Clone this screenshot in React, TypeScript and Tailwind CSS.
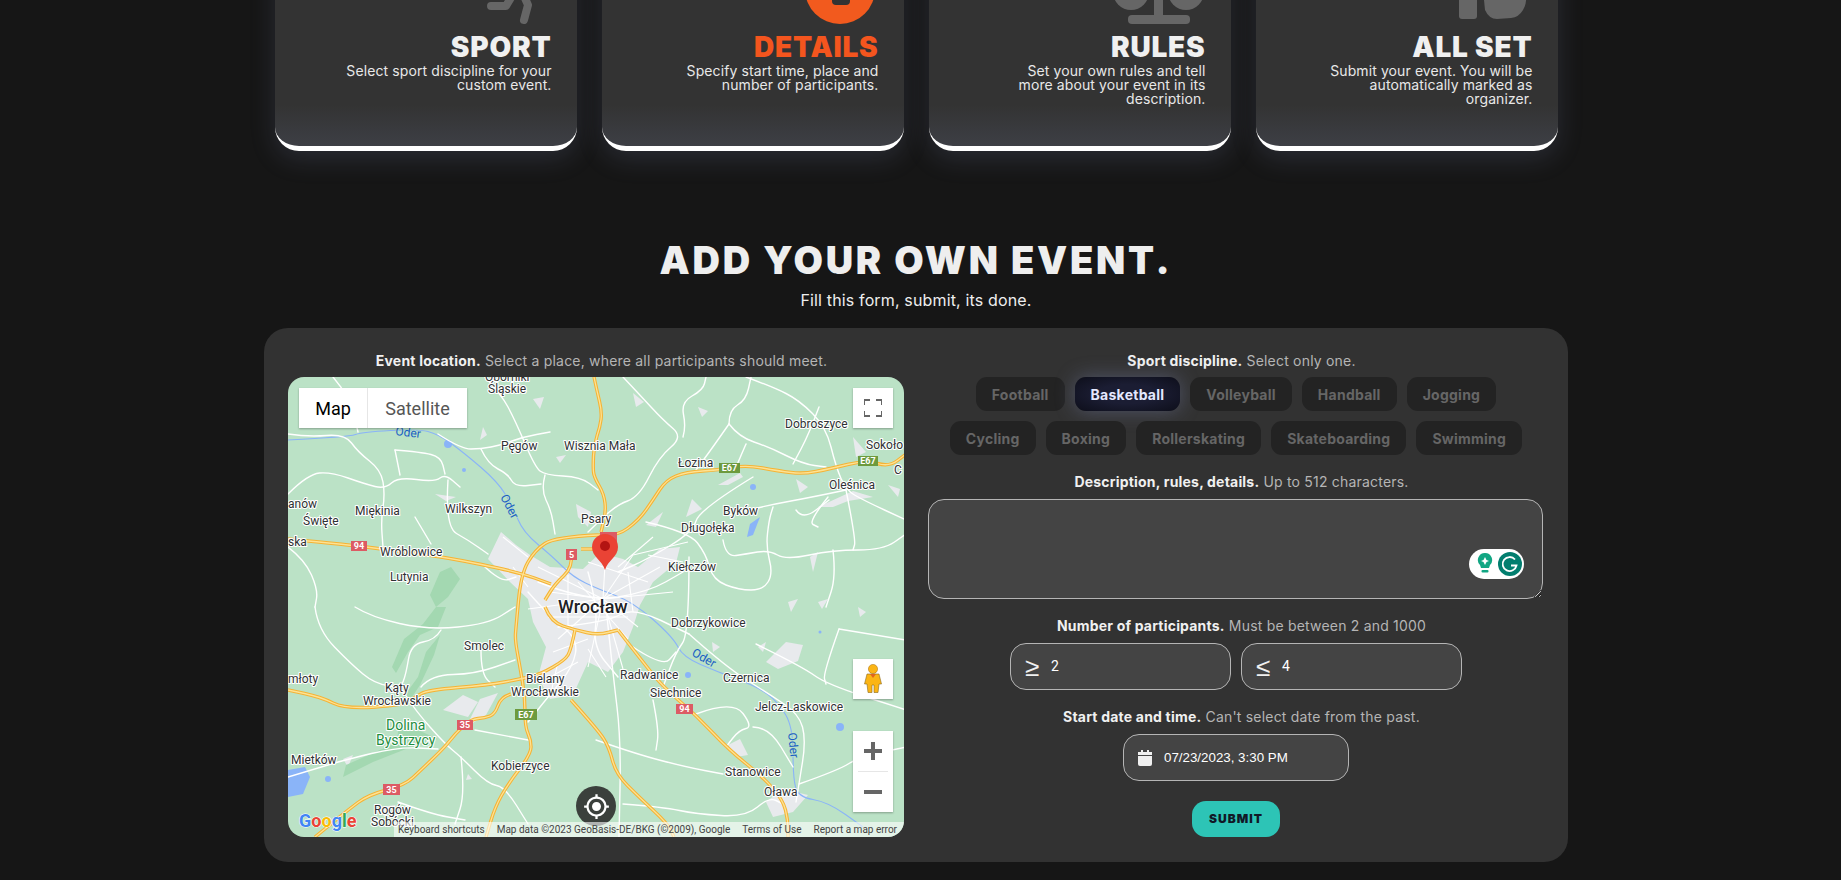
import { MdMyLocation } from "react-icons/md";

type Pt = [number, number];

// rounds off a list of points into one path
const smooth = (pts: Pt[]) => {
  let d = `M${pts[0][0]} ${pts[0][1]}`;
  for (let i = 1; i < pts.length - 1; i++) {
    const mx = (pts[i][0] + pts[i + 1][0]) / 2;
    const my = (pts[i][1] + pts[i + 1][1]) / 2;
    d += ` Q${pts[i][0]} ${pts[i][1]} ${mx} ${my}`;
  }
  const last = pts[pts.length - 1];
  return d + ` L${last[0]} ${last[1]}`;
};

const roads: Pt[][] = [
  [[0, 57], [20, 60], [57, 57], [70, 75], [93, 93], [97, 117], [93, 143], [95, 170]],
  [[0, 117], [20, 97], [43, 95], [77, 107], [97, 112], [110, 100], [147, 105], [157, 97], [172, 110]],
  [[107, 73], [112, 98]],
  [[107, 73], [133, 75], [153, 80], [157, 97]],
  [[197, 0], [213, 17], [227, 43], [247, 90], [257, 98], [293, 100], [310, 113]],
  [[257, 98], [253, 113], [263, 133], [267, 157]],
  [[150, 57], [173, 72], [193, 72], [213, 68], [235, 60], [262, 55]],
  [[193, 72], [200, 87], [220, 97], [227, 110], [253, 107]],
  [[127, 140], [143, 167]],
  [[160, 103], [157, 150], [180, 163], [200, 177]],
  [[0, 170], [17, 183], [30, 213], [27, 230]],
  [[45, 0], [62, 20], [70, 55]],
  [[335, 0], [351, 17], [375, 43], [395, 60], [371, 80], [351, 120], [328, 128], [300, 155]],
  [[395, 60], [398, 50], [393, 25], [415, 13], [418, 0]],
  [[441, 47], [451, 60], [481, 70], [515, 87], [538, 90]],
  [[441, 47], [441, 33], [458, 23], [463, 0]],
  [[441, 47], [425, 70], [408, 93]],
  [[458, 67], [448, 90]],
  [[458, 0], [485, 10], [511, 23], [538, 50], [548, 90], [558, 113], [575, 123], [618, 143]],
  [[531, 30], [521, 57], [505, 87]],
  [[465, 100], [411, 133], [405, 155], [358, 183], [330, 195]],
  [[558, 113], [525, 120], [481, 128], [441, 138]],
  [[358, 145], [401, 155], [418, 177], [425, 203], [451, 213], [475, 213], [485, 197], [478, 170], [481, 143], [485, 130]],
  [[435, 163], [438, 180], [458, 177], [481, 173], [498, 183], [545, 173], [595, 173], [618, 157]],
  [[545, 173], [548, 200], [538, 230]],
  [[558, 113], [568, 163], [565, 173]],
  [[508, 133], [515, 143], [541, 123]],
  [[401, 257], [438, 290], [481, 317], [511, 337], [518, 363], [511, 407], [508, 425]],
  [[401, 180], [401, 257], [388, 275], [375, 310]],
  [[468, 267], [515, 290], [538, 307], [618, 333]],
  [[551, 252], [618, 263]],
  [[551, 252], [535, 297], [538, 307]],
  [[308, 363], [348, 377], [398, 390], [435, 397]],
  [[408, 337], [445, 323], [465, 350], [451, 353], [438, 370]],
  [[465, 350], [481, 350], [505, 390]],
  [[511, 407], [551, 393], [571, 380], [618, 370]],
  [[318, 230], [325, 297], [333, 363], [331, 460]],
  [[365, 323], [371, 353], [368, 373]],
  [[335, 427], [375, 430], [408, 437], [458, 440], [481, 420], [495, 427]],
  [[27, 230], [30, 253], [63, 287], [87, 307], [113, 310], [127, 333], [157, 367], [173, 380], [200, 407], [217, 410], [240, 447]],
  [[67, 230], [83, 240], [140, 253], [200, 247], [227, 230]],
  [[153, 253], [147, 263], [123, 267], [118, 297], [113, 310]],
  [[133, 310], [143, 298], [187, 297], [227, 283]],
  [[193, 273], [193, 297], [207, 310]],
  [[0, 400], [33, 390], [57, 383], [110, 370], [150, 372]],
  [[173, 380], [177, 417], [167, 447]],
  [[187, 353], [240, 363]],
  [[110, 425], [143, 437], [177, 443]],
  [[240, 215], [262, 240], [290, 262], [285, 290], [260, 320], [240, 345]],
  [[300, 195], [310, 230], [305, 270], [330, 300]],
  [[250, 205], [300, 225], [360, 215], [395, 195]],
  [[270, 250], [320, 245], [345, 230], [401, 257]],
  [[197, 190], [213, 205], [228, 200]],
  [[345, 270], [375, 290], [388, 275]],
  [[540, 120], [520, 145], [530, 150]],
];

// streets inside the city
const streets: [number, number, number, number][] = [
  [315, 222, 250, 190], [315, 222, 262, 215], [315, 222, 240, 232], [315, 222, 270, 262], [315, 222, 300, 290],
  [315, 222, 318, 170], [315, 222, 345, 178], [315, 222, 372, 190], [315, 222, 385, 215], [315, 222, 350, 250],
  [315, 222, 335, 292], [280, 198, 280, 250], [300, 185, 360, 205], [260, 240, 340, 240], [290, 205, 340, 262],
  [340, 195, 345, 235], [265, 275, 300, 262], [262, 300, 290, 285], [270, 285, 262, 320], [345, 178, 400, 165],
  [330, 190, 365, 160], [360, 178, 395, 185], [240, 180, 215, 160], [225, 190, 240, 210], [300, 272, 318, 300],
];

const labels: [string, number, number][] = [
  ["Oborniki", 197, 4],
  ["Śląskie", 200, 16],
  ["Pęgów", 213, 73],
  ["Wisznia Mała", 276, 73],
  ["anów", 0, 131],
  ["Miękinia", 67, 138],
  ["Święte", 15, 148],
  ["Wilkszyn", 157, 136],
  ["Psary", 293, 146],
  ["ska", 0, 169],
  ["Wróblowice", 92, 179],
  ["Lutynia", 102, 204],
  ["Dobroszyce", 497, 51],
  ["Sokoło", 578, 72],
  ["Łozina", 390, 90],
  ["Oleśnica", 541, 112],
  ["C", 606, 97],
  ["Byków", 435, 138],
  ["Długołęka", 393, 155],
  ["Kiełczów", 380, 194],
  ["młoty", 0, 306],
  ["Smolec", 176, 273],
  ["Kąty", 97, 315],
  ["Wrocławskie", 75, 328],
  ["Bielany", 238, 306],
  ["Wrocławskie", 223, 319],
  ["Mietków", 3, 387],
  ["Kobierzyce", 203, 393],
  ["Rogów", 86, 437],
  ["Sobócki", 83, 449],
  ["Dobrzykowice", 383, 250],
  ["Radwanice", 332, 302],
  ["Siechnice", 362, 320],
  ["Czernica", 435, 305],
  ["Jelcz-Laskowice", 467, 334],
  ["Stanowice", 437, 399],
  ["Oława", 476, 419],
];

const shields: [string, number, number, number, number, string][] = [
  ["E67", 431, 86, 21, 10, "#6d9a3e"],
  ["E67", 570, 79, 20, 10, "#6d9a3e"],
  ["E67", 227, 332, 22, 11, "#6d9a3e"],
  ["94", 63, 164, 16, 10, "#dc5b64"],
  ["5", 278, 172, 11, 11, "#dc5b64"],
  ["", 312, 155, 17, 10, "#dc5b64"],
  ["35", 169, 343, 16, 10, "#dc5b64"],
  ["35", 95, 407, 17, 11, "#dc5b64"],
  ["94", 388, 327, 17, 10, "#dc5b64"],
];

const highways: Pt[][] = [
  [[306, 0], [309, 14], [314, 35], [312, 50], [306, 68], [305, 90], [306, 100], [316, 117], [318, 135], [313, 155]],
  [[310, 158], [267, 160], [247, 173], [233, 197], [228, 250], [227, 263], [232, 290], [237, 320], [237, 350], [243, 363], [243, 377], [220, 407], [207, 430], [198, 460]],
  [[310, 158], [328, 160], [351, 143], [365, 123], [378, 103], [398, 95], [431, 93], [458, 88], [491, 94], [515, 97], [541, 92], [578, 83], [601, 90], [618, 77]],
  [[257, 230], [263, 245], [287, 253], [310, 258], [330, 253]],
  [[287, 253], [283, 273], [277, 283], [253, 297], [233, 302], [200, 308], [140, 313], [127, 320], [117, 328], [57, 332], [33, 320], [0, 313]],
  [[223, 317], [213, 320], [207, 337], [197, 341], [183, 342], [167, 357], [157, 370], [133, 393], [117, 408], [80, 418], [60, 433], [43, 447], [27, 460]],
  [[0, 162], [63, 168], [93, 172], [157, 180], [230, 195], [263, 207]],
  [[283, 177], [285, 190], [267, 207], [257, 223]],
  [[293, 172], [316, 172]],
  [[330, 253], [351, 280], [375, 310], [408, 338], [441, 373], [475, 400], [495, 423], [500, 443], [500, 460]],
  [[283, 323], [310, 353], [321, 370], [328, 397], [351, 420], [380, 447], [386, 460]],
];

const river: Pt[] = [[0, 63], [60, 60], [75, 55], [130, 52], [150, 57], [175, 75], [210, 105], [225, 130], [235, 155], [265, 180], [285, 200], [310, 212], [345, 225], [385, 260], [395, 280], [430, 295], [470, 310], [490, 325], [505, 350], [505, 400], [510, 420], [540, 425], [575, 450]];

function MapPicture() {
  return (
    <svg viewBox="0 0 616 460" className="block h-full w-full font-['Roboto',sans-serif]">
      <rect width="616" height="460" fill="#bbe2c6" />
      {/* city and villages */}
      <g fill="#e8eaed">
        <path d="M200 182 L213 155 L228 168 L242 178 L262 190 L295 192 L312 176 L335 182 L350 190 L372 172 L392 170 L388 186 L365 205 L352 228 L345 250 L335 275 L320 295 L300 285 L285 318 L262 322 L250 300 L258 270 L245 245 L240 222 L222 205 Z" />
        <path d="M178 350 L198 338 L210 316 L192 322 Z" />
        <path d="M478 285 L498 265 L515 268 L510 284 L490 292 Z" />
        <path d="M530 130 L565 114 L585 120 L560 124 L545 130 Z" />
        <path d="M478 425 L495 412 L520 418 L505 435 L485 440 Z" />
        <path d="M404 122 L414 132 L398 140 Z" />
        <path d="M440 368 L452 362 L460 378 L448 380 Z" />
        <path d="M245 22 L256 20 L252 32 Z" />
        <path d="M147 117 L168 120 L158 124 Z" />
        <path d="M288 127 L303 135 L300 150 L290 140 Z" />
        <path d="M195 50 L199 58 L192 63 Z" />
        <path d="M268 80 L278 78 L272 86 Z" />
        <path d="M375 135 L368 150 L358 148 Z" />
        <path d="M508 102 L520 110 L512 116 Z" />
        <path d="M565 60 L578 75 L568 80 Z" />
        <path d="M600 108 L612 112 L610 120 Z" />
        <path d="M430 108 L452 96 L455 100 L440 108 Z" />
        <path d="M522 180 L530 175 L525 195 Z" />
        <path d="M345 16 L356 25 L348 30 Z" />
        <path d="M470 270 L478 265 L475 275 Z" />
        <path d="M424 265 L432 270 L425 275 Z" />
        <path d="M570 230 L578 235 L572 240 Z" />
        <path d="M500 225 L510 222 L503 235 Z" />
        <path d="M155 333 L175 318 L190 325 L180 340 Z" />
        <path d="M530 225 L540 222 L534 232 Z" />
        <path d="M92 430 L108 428 L96 440 Z" />
        <path d="M55 382 L65 378 L60 390 Z" />
        <path d="M180 397 L184 402 L178 403 Z" />
        <path d="M410 30 L420 34 L414 40 Z" />
      </g>
      {/* forest */}
      <g fill="#a3d8b1">
        <path d="M148 230 L158 230 L150 250 L132 258 L120 275 L108 296 L104 290 L116 262 L135 247 Z" />
        <path d="M130 300 L138 275 L152 258 L146 278 L132 308 L120 326 L114 322 Z" />
        <path d="M112 345 L150 362 L118 372 L85 385 L55 400 L58 388 L85 376 L108 366 Z" />
        <path d="M152 195 L163 190 L172 202 L160 220 L148 230 L142 218 Z" />
      </g>
      <path d={smooth(river)} fill="none" stroke="#8ab4f8" strokeWidth="1.1" />
      <g fill="#8ab4f8">
        <path d="M0 393 L17 390 L22 400 L15 417 L0 420 Z" />
        <circle cx="160" cy="67" r="4" />
        <circle cx="40" cy="402" r="3" />
        <circle cx="176" cy="93" r="2" />
        <circle cx="400" cy="298" r="3" />
        <circle cx="552" cy="350" r="4" />
        <circle cx="465" cy="110" r="3" />
        <path d="M462 147 L472 140 L465 158 L459 160 Z" />
        <circle cx="532" cy="255" r="1.5" />
      </g>
      <g stroke="#ffffff" strokeWidth="1.1">
        {streets.map(([a, b, c, d], i) => (
          <line key={i} x1={a} y1={b} x2={c} y2={d} />
        ))}
      </g>
      <g fill="none" stroke="#ffffff" strokeWidth="1.4" strokeLinejoin="round" strokeLinecap="round">
        {roads.map((r, i) => (
          <path key={i} d={smooth(r)} />
        ))}
      </g>
      <g fill="none" stroke="#f5b335" strokeWidth="3.4" strokeLinejoin="round">
        {highways.map((r, i) => (
          <path key={i} d={smooth(r)} />
        ))}
      </g>
      <g fill="none" stroke="#fde293" strokeWidth="1.3" strokeLinejoin="round">
        {highways.map((r, i) => (
          <path key={i} d={smooth(r)} />
        ))}
      </g>
      {shields.map(([t, x, y, w, h, c], i) => (
        <g key={i}>
          <rect x={x} y={y} width={w} height={h} fill={c} />
          <text x={x + w / 2} y={y + h - 2} textAnchor="middle" fontSize="9" fontWeight="700" fill="#fff">
            {t}
          </text>
        </g>
      ))}
      <g fontSize="12" fill="#2f3133" stroke="#fff" strokeWidth="2.2" strokeLinejoin="round" className="[paint-order:stroke]">
        {labels.map(([t, x, y], i) => (
          <text key={i} x={x} y={y}>
            {t}
          </text>
        ))}
        <text x="270" y="236" fontSize="18" fontWeight="500" fill="#202124">
          Wrocław
        </text>
        <text x="98" y="353" fontSize="14" fill="#1e8e3e">
          Dolina
        </text>
        <text x="88" y="368" fontSize="14" fill="#1e8e3e">
          Bystrzycy
        </text>
      </g>
      <g fontSize="12" fill="#1a5fc4" stroke="#bbe2c6" strokeWidth="1.5" className="[paint-order:stroke]">
        <text x="107" y="58" transform="rotate(7 107 58)">Oder</text>
        <text x="212" y="120" transform="rotate(62 212 120)">Oder</text>
        <text x="403" y="278" transform="rotate(30 403 278)">Oder</text>
        <text x="500" y="356" transform="rotate(84 500 356)">Oder</text>
      </g>
      {/* marker */}
      <path d="M317 193 C314 183 304 180 304 170 A13 13 0 0 1 330 170 C330 180 320 183 317 193 Z" fill="#ea4335" />
      <circle cx="317" cy="169" r="5" fill="#b31412" />
      <text x="11" y="450" fontSize="18" fontWeight="700" stroke="#fff" strokeWidth="1" className="[paint-order:stroke]">
        <tspan fill="#4285f4">G</tspan>
        <tspan fill="#ea4335">o</tspan>
        <tspan fill="#fbbc05">o</tspan>
        <tspan fill="#4285f4">g</tspan>
        <tspan fill="#34a853">l</tspan>
        <tspan fill="#ea4335">e</tspan>
      </text>
    </svg>
  );
}

function MapBox() {
  return (
    <div className="relative h-[460px] w-full overflow-hidden rounded-2xl font-['Roboto',sans-serif] tracking-normal">
      <MapPicture />
      <div className="absolute left-[11px] top-[11px] flex h-10 bg-white text-[18px] shadow-[0_1px_2px_rgba(0,0,0,0.3)]">
        <div className="flex w-[68px] items-center justify-center text-black">Map</div>
        <div className="flex w-[100px] items-center justify-center border-l border-[#e6e6e6] text-[#565656]">Satellite</div>
      </div>
      <div className="absolute right-[11px] top-[11px] flex h-10 w-10 items-center justify-center bg-white shadow-[0_1px_2px_rgba(0,0,0,0.3)]">
        <svg width="18" height="18" viewBox="0 0 18 18" fill="none" stroke="#666" strokeWidth="2">
          <path d="M0 6 V1 H6 M12 1 H18 V6 M18 12 V17 H12 M6 17 H0 V12" />
        </svg>
      </div>
      <div className="absolute right-[11px] top-[282px] flex h-10 w-10 items-center justify-center bg-white shadow-[0_1px_2px_rgba(0,0,0,0.3)]">
        <svg width="18" height="30" viewBox="0 0 18 30">
          <circle cx="9" cy="5" r="4.6" fill="#fbb515" stroke="#a56a06" strokeWidth="0.5" />
          <path d="M3 10 H15 L17.5 20 H15 L14 28.5 H10 V21 H8 V28.5 H4 L3 20 H0.5 Z" fill="#fbb515" stroke="#8a6a20" strokeWidth="0.6" />
          <path d="M6 10 L9 14 L12 10 Z" fill="#e0651f" />
        </svg>
      </div>
      <div className="absolute right-[11px] top-[354px] flex h-[81px] w-10 flex-col items-center bg-white shadow-[0_1px_2px_rgba(0,0,0,0.3)]">
        <div className="flex h-10 w-full items-center justify-center">
          <svg width="18" height="18" viewBox="0 0 18 18" fill="#666">
            <path d="M7 0 H11 V7 H18 V11 H11 V18 H7 V11 H0 V7 H7 Z" />
          </svg>
        </div>
        <div className="h-px w-[30px] bg-[#e6e6e6]" />
        <div className="flex h-10 w-full items-center justify-center">
          <div className="h-1 w-[18px] bg-[#666]" />
        </div>
      </div>
      <div className="absolute left-[288px] top-[409px] flex h-10 w-10 items-center justify-center rounded-full bg-[#3b403c] text-white">
        <MdMyLocation size={27} />
      </div>
      <div className="absolute bottom-0 right-0 flex h-[15px] items-center gap-[12px] bg-white/60 pl-1 pr-[7px] text-[10px] text-[#444]">
        <span>Keyboard shortcuts</span>
        <span>Map data ©2023 GeoBasis-DE/BKG (©2009), Google</span>
        <span>Terms of Use</span>
        <span>Report a map error</span>
      </div>
    </div>
  );
}

const SPORTS = [
  ["Football", "Basketball", "Volleyball", "Handball", "Jogging"],
  ["Cycling", "Boxing", "Rollerskating", "Skateboarding", "Swimming"],
];

function FieldLabel({ strong, rest }: { strong: string; rest: string }) {
  return (
    <p className="pl-[11px] text-center text-[14px] leading-5 tracking-[0.2px] text-[#b5b5b5]">
      <span className="font-bold text-[#f0f0f0]">{strong}</span> {rest}
    </p>
  );
}

const steps = [
  {
    title: "SPORT",
    text: ["Select sport discipline for your", "custom event."],
    active: false,
    icon: (
      <g fill="none" stroke="#666" strokeWidth="8" strokeLinecap="round" strokeLinejoin="round">
        <path d="M41 86 H56 L62 76" />
        <path d="M74 76 L78 85 L74 100" />
        <path d="M50 55 L70 60 L76 76" />
      </g>
    ),
  },
  {
    title: "DETAILS",
    text: ["Specify start time, place and", "number of participants."],
    active: true,
    icon: (
      <g>
        <circle cx="63" cy="69" r="35" fill="#f25a1e" />
        <rect x="55" y="62" width="18" height="23" rx="4" fill="#333" />
      </g>
    ),
  },
  {
    title: "RULES",
    text: ["Set your own rules and tell", "more about your event in its", "description."],
    active: false,
    icon: (
      <g fill="#666">
        <circle cx="27" cy="72" r="18" />
        <circle cx="82" cy="72" r="18" />
        <rect x="50" y="50" width="9" height="46" />
        <rect x="24" y="95" width="62" height="9" rx="4" />
      </g>
    ),
  },
  {
    title: "ALL SET",
    text: ["Submit your event. You will be", "automatically marked as", "organizer."],
    active: false,
    icon: (
      <g fill="#666">
        <rect x="28" y="60" width="18" height="39" rx="3" />
        <path d="M51 60 H96 L95 74 Q96 84 92 90 Q88 97 80 98 L66 99 Q58 99 54 90 Z" />
      </g>
    ),
  },
];

function StepCard({ step }: { step: (typeof steps)[number] }) {
  return (
    <div className="flex h-[281px] w-[302px] flex-col items-end overflow-hidden rounded-[24px] border-b-[5px] border-white bg-[linear-gradient(to_bottom,#333333_85%,#3d3f45_100%)] pr-[25px] pt-[50px] text-right shadow-[0_8px_26px_rgba(120,130,170,0.2)]">
      <svg width="104" height="104" viewBox="0 0 104 104" className="mr-[-2px] shrink-0">
        {step.icon}
      </svg>
      <h3 className={`mt-[9px] text-[28px] font-black leading-[28px] tracking-[0.8px] ${step.active ? "text-[#f4551e]" : "text-[#f0f0f0]"}`}>
        {step.title}
      </h3>
      <p className="mt-[3px] text-[14px] leading-[14px] tracking-[0.1px] text-[#e8e8e8]">
        {step.text.map((line) => (
          <span key={line} className="block">
            {line}
          </span>
        ))}
      </p>
    </div>
  );
}

function GrammarlyWidget() {
  return (
    <div className="absolute bottom-[20px] right-[19px] flex h-[30px] w-[55px] items-center justify-between rounded-full bg-white pl-2 pr-[2px]">
      <svg width="16" height="24" viewBox="0 0 16 24">
        <path d="M8 1 A7 7 0 0 1 13 13 L12 16 H4 L3 13 A7 7 0 0 1 8 1 Z" fill="#11a683" />
        <path d="M8 5 L9.5 8 L12 9 L9.5 10 L8 13 L6.5 10 L4 9 L6.5 8 Z" fill="#fff" />
        <rect x="4.5" y="18" width="7" height="2.5" rx="1" fill="#11a683" />
      </svg>
      <svg width="24" height="24" viewBox="0 0 24 24">
        <circle cx="12" cy="12" r="12" fill="#027e6f" />
        <path d="M17 7.5 A7 7 0 1 0 18.5 13.5 H13" fill="none" stroke="#fff" strokeWidth="1.8" />
      </svg>
    </div>
  );
}

function NumberBox({ sign, value }: { sign: string; value: string }) {
  return (
    <div className="flex h-[47px] w-[221px] items-center rounded-2xl border border-[#b5b5b5] bg-[#444444] pl-[14px]">
      <span className="w-[26px] font-['Liberation_Sans',sans-serif] text-[26px] leading-none text-[#f0f0f0]">{sign}</span>
      <span className="font-['Roboto',sans-serif] text-[14px] text-white">{value}</span>
    </div>
  );
}

export default function App() {
  return (
    <div className="h-[880px] overflow-hidden bg-[#161616] pr-[9px] font-['Inter',sans-serif]">
      <div className="mt-[-130px] flex justify-center gap-[25px]">
        {steps.map((s) => (
          <StepCard key={s.title} step={s} />
        ))}
      </div>

      <h1 className="mt-[90px] text-center text-[38px] font-black leading-[38px] tracking-[2.75px] text-[#eeeeee]">
        ADD YOUR OWN EVENT.
      </h1>
      <p className="mt-[9px] text-center text-[16px] leading-6 tracking-[0.15px] text-[#eeeeee]">Fill this form, submit, its done.</p>

      <div className="mx-auto mt-4 grid w-[1304px] grid-cols-2 gap-6 rounded-[24px] bg-[#323232] px-6 pb-[25px] pt-[23px]">
        <div className="flex flex-col gap-[6px]">
          <FieldLabel strong="Event location." rest="Select a place, where all participants should meet." />
          <MapBox />
        </div>

        <div className="flex flex-col items-center">
          <FieldLabel strong="Sport discipline." rest="Select only one." />
          <div className="mt-[6px] flex flex-col items-center gap-[10px]">
            {SPORTS.map((row, i) => (
              <div key={i} className="flex gap-[10px]">
                {row.map((name) =>
                  name === "Basketball" ? (
                    <button
                      key={name}
                      className="h-[34px] rounded-[11px] bg-[radial-gradient(ellipse_at_center,#1b1d33_40%,#0d0e1a_100%)] px-4 text-[14px] font-bold tracking-[0.25px] text-[#e4e8ff] shadow-[0_0_20px_rgba(130,140,190,0.4)]"
                    >
                      {name}
                    </button>
                  ) : (
                    <button key={name} className="h-[34px] rounded-[11px] bg-[#232323] px-4 text-[14px] font-bold tracking-[0.25px] text-[#666666]">
                      {name}
                    </button>
                  )
                )}
              </div>
            ))}
          </div>

          <div className="mt-[17px]">
            <FieldLabel strong="Description, rules, details." rest="Up to 512 characters." />
          </div>
          <div className="relative mt-[7px] w-[615px] self-start">
            <textarea className="block h-[100px] w-full rounded-2xl border border-[#b5b5b5] bg-[#444444] px-4 py-3 text-white outline-none" />
            <GrammarlyWidget />
          </div>

          <div className="mt-[17px]">
            <FieldLabel strong="Number of participants." rest="Must be between 2 and 1000" />
          </div>
          <div className="mt-[7px] flex gap-[10px]">
            <NumberBox sign="≥" value="2" />
            <NumberBox sign="≤" value="4" />
          </div>

          <div className="mt-[17px]">
            <FieldLabel strong="Start date and time." rest="Can't select date from the past." />
          </div>
          <div className="mt-[7px] flex h-[47px] w-[226px] items-center rounded-2xl border border-[#b5b5b5] bg-[#444444] pl-[14px]">
            <svg width="14" height="16" viewBox="0 0 14 16" fill="#f0f0f0" className="mr-[12px]">
              <path d="M3 0 H5 V2 H9 V0 H11 V2 H14 V5 H0 V2 H3 Z" />
              <path d="M0 6 H14 V14 A2 2 0 0 1 12 16 H2 A2 2 0 0 1 0 14 Z" />
            </svg>
            <span className="font-['Liberation_Sans',sans-serif] text-[13.33px] text-white">07/23/2023, 3:30 PM</span>
          </div>

          <button className="mt-5 h-9 w-[88px] rounded-[14px] bg-[#2dc4b6] text-[12px] font-black tracking-[1px] text-[#111827]">
            SUBMIT
          </button>
        </div>
      </div>
    </div>
  );
}
